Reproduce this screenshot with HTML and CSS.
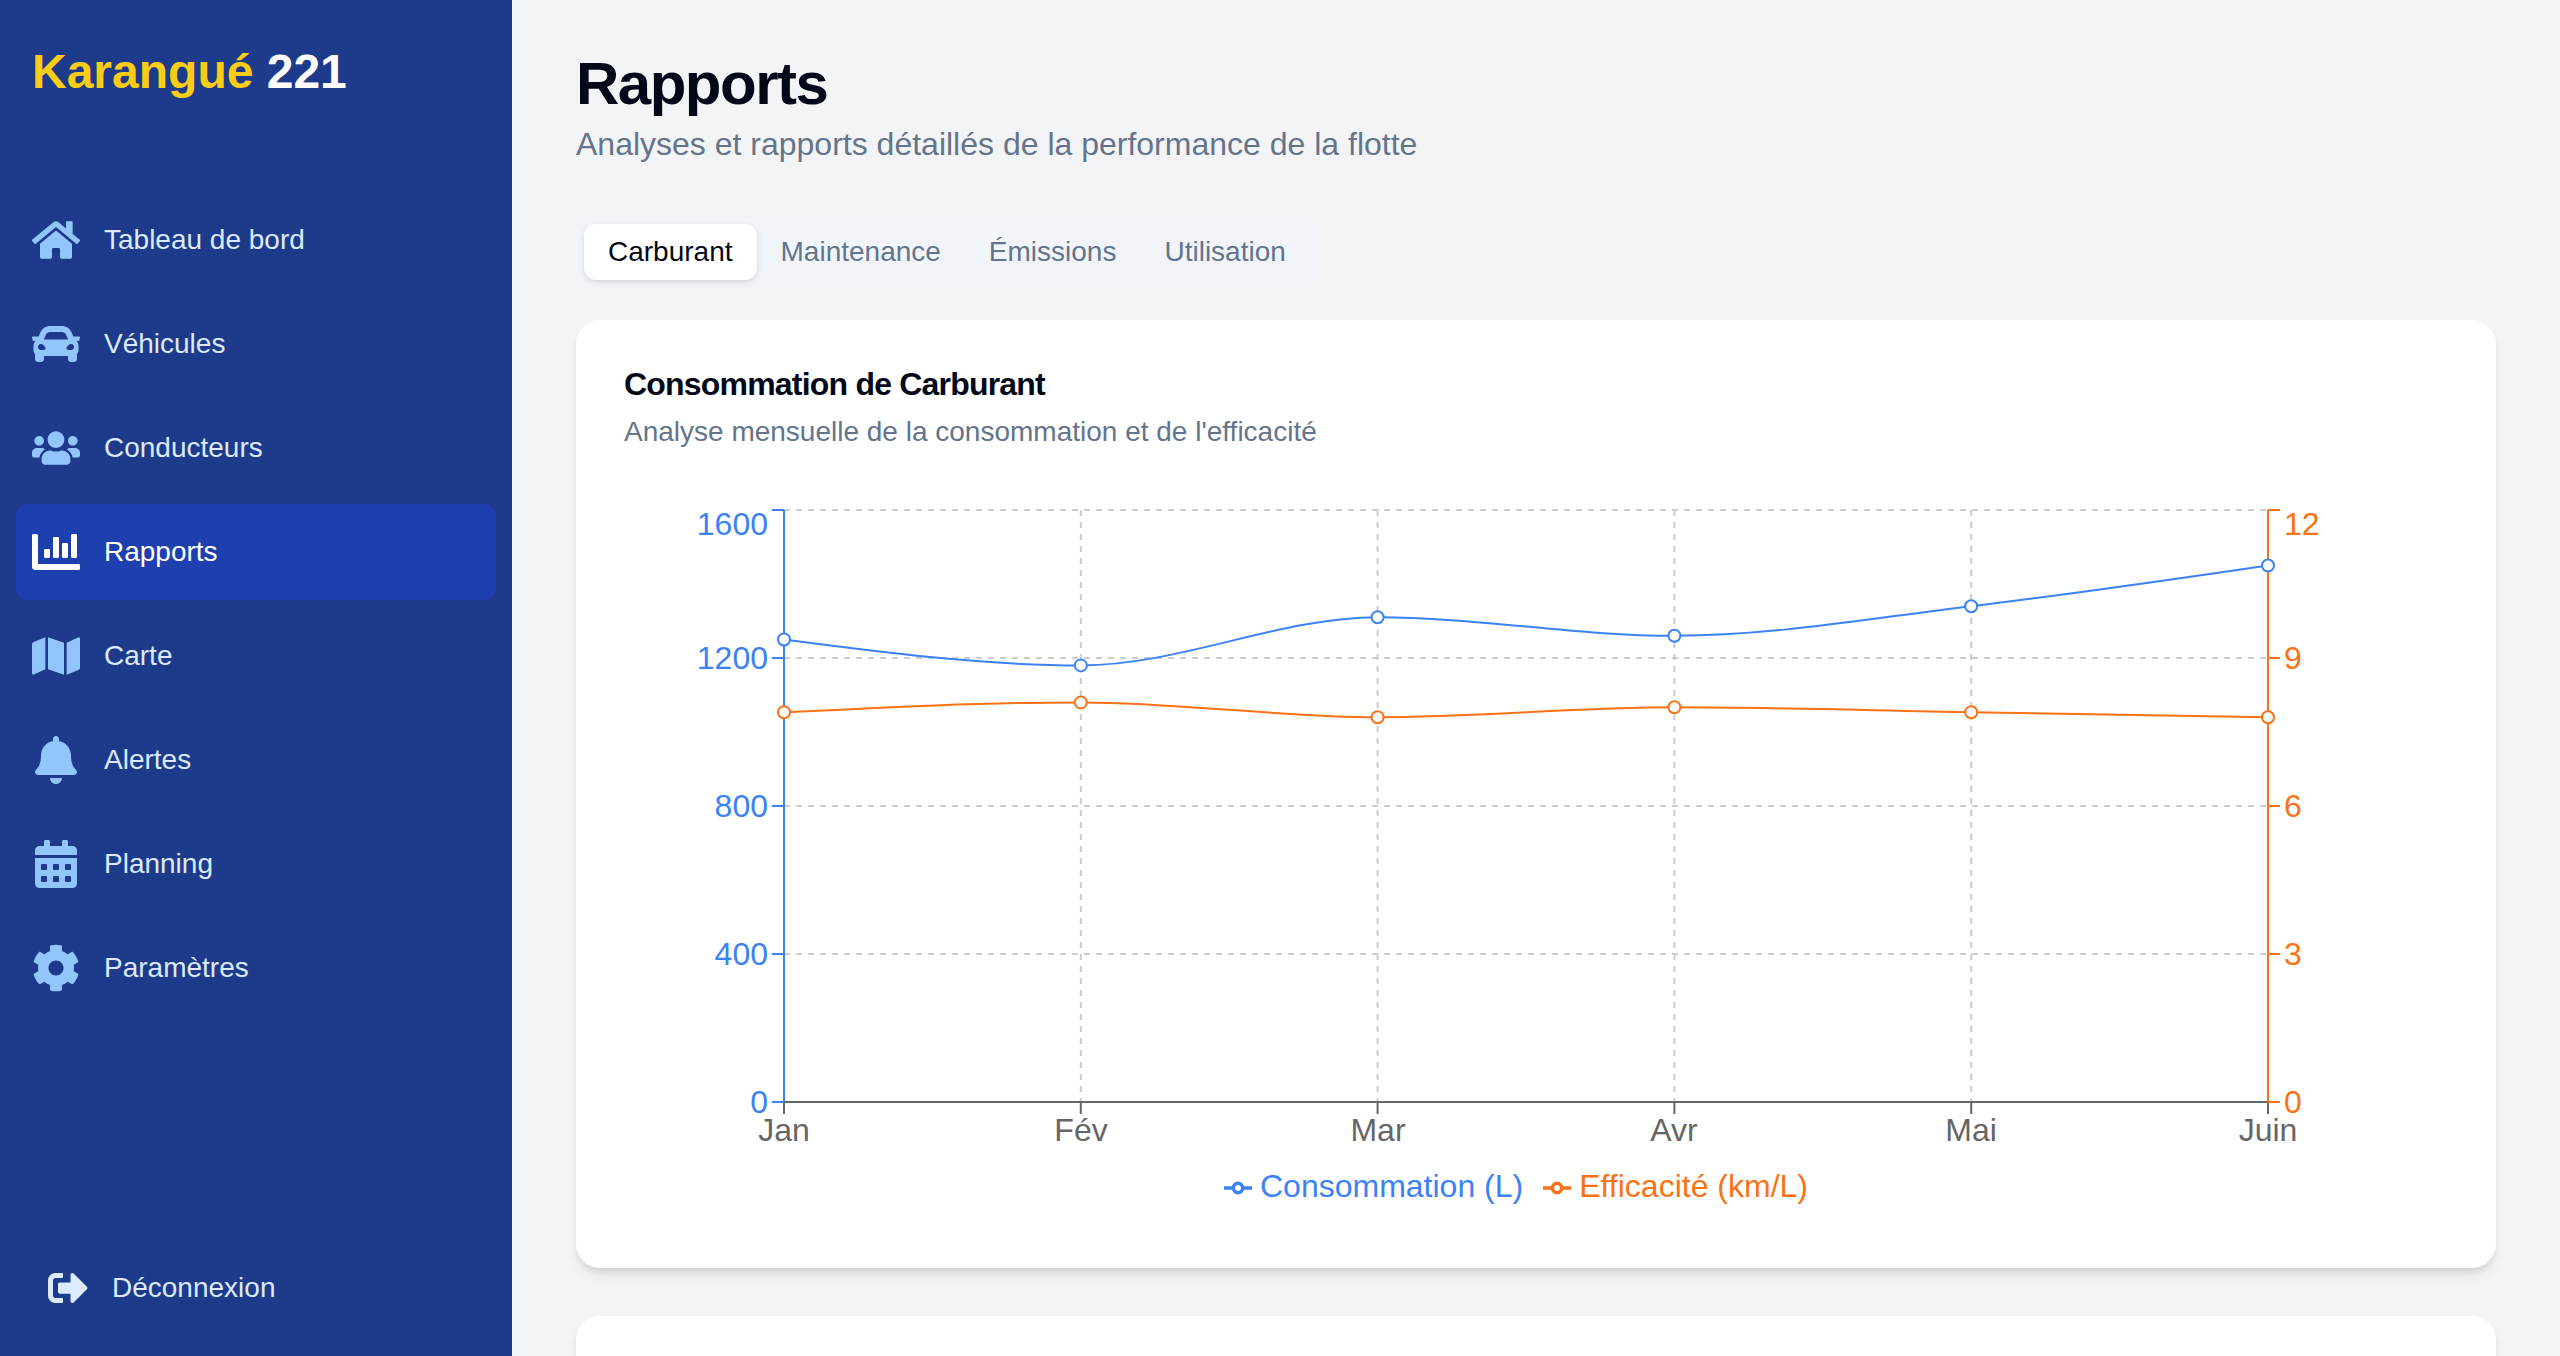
FILE: index.html
```html
<!DOCTYPE html>
<html lang="fr">
<head>
<meta charset="utf-8">
<meta name="viewport" content="width=device-width, initial-scale=1">
<title>Karangué 221</title>
<link rel="stylesheet" href="styles.css">
</head>
<body>
<div class="app">
  <aside class="sidebar">
    <div class="brand"><span class="brand-name">Karangué</span> 221</div>
    <nav class="nav">
      <a class="nav-link" href="#tableau">
        <svg class="icon" viewBox="0 0 576 512" aria-hidden="true"><path d="M280.37 148.26L96 300.11V464a16 16 0 0 0 16 16l112.06-.29a16 16 0 0 0 15.92-16V368a16 16 0 0 1 16-16h64a16 16 0 0 1 16 16v95.64a16 16 0 0 0 16 16.05L464 480a16 16 0 0 0 16-16V300L295.67 148.26a12.19 12.19 0 0 0-15.3 0zM571.6 251.47L488 182.56V44.05a12 12 0 0 0-12-12h-56a12 12 0 0 0-12 12v72.61L318.47 43a48 48 0 0 0-61 0L4.34 251.47a12 12 0 0 0-1.6 16.9l25.5 31A12 12 0 0 0 45.15 301l235.22-193.74a12.19 12.19 0 0 1 15.3 0L530.9 301a12 12 0 0 0 16.9-1.6l25.5-31a12 12 0 0 0-1.7-16.93z"/></svg>
        <span>Tableau de bord</span>
      </a>
      <a class="nav-link" href="#vehicules">
        <svg class="icon" viewBox="0 0 512 512" aria-hidden="true"><path d="M499.99 176h-59.87l-16.64-41.6C406.38 91.63 365.57 64 319.5 64h-127c-46.06 0-86.88 27.63-103.99 70.4L71.87 176H12.01C4.2 176-1.53 183.34.37 190.91l6 24C7.7 220.25 12.5 224 18.01 224h20.07C24.65 235.73 16 252.78 16 272v48c0 16.12 6.16 30.67 16 41.93V416c0 17.67 14.33 32 32 32h32c17.67 0 32-14.33 32-32v-32h256v32c0 17.67 14.33 32 32 32h32c17.67 0 32-14.33 32-32v-54.07c9.84-11.25 16-25.8 16-41.93v-48c0-19.22-8.65-36.27-22.07-48H494c5.51 0 10.31-3.75 11.64-9.09l6-24c1.89-7.57-3.84-14.91-11.65-14.91zm-352.06-17.83c7.29-18.22 24.94-30.17 44.57-30.17h127c19.63 0 37.28 11.95 44.57 30.17L384 208H128l19.93-49.83zM96 319.8c-19.2 0-32-12.76-32-31.9S76.8 256 96 256s48 28.71 48 47.85-28.8 15.95-48 15.95zm320 0c-19.2 0-48 3.19-48-15.95S396.8 256 416 256s32 12.76 32 31.9-12.8 31.9-32 31.9z"/></svg>
        <span>Véhicules</span>
      </a>
      <a class="nav-link" href="#conducteurs">
        <svg class="icon" viewBox="0 0 640 512" aria-hidden="true"><path d="M96 224c35.3 0 64-28.7 64-64s-28.7-64-64-64-64 28.7-64 64 28.7 64 64 64zm448 0c35.3 0 64-28.7 64-64s-28.7-64-64-64-64 28.7-64 64 28.7 64 64 64zm32 32h-64c-17.6 0-33.5 7.1-45.1 18.6 40.3 22.1 68.9 62 75.1 109.4h66c17.7 0 32-14.3 32-32v-32c0-35.3-28.7-64-64-64zm-256 0c61.9 0 112-50.1 112-112S381.9 32 320 32 208 82.1 208 144s50.1 112 112 112zm76.8 32h-8.3c-20.8 10-43.9 16-68.5 16s-47.6-6-68.5-16h-8.3C179.6 288 128 339.6 128 403.2V432c0 26.5 21.5 48 48 48h288c26.5 0 48-21.5 48-48v-28.8c0-63.6-51.6-115.2-115.2-115.2zm-223.7-13.4C161.5 263.1 145.6 256 128 256H64c-35.3 0-64 28.7-64 64v32c0 17.7 14.3 32 32 32h65.9c6.3-47.4 34.9-87.3 75.2-109.4z"/></svg>
        <span>Conducteurs</span>
      </a>
      <a class="nav-link active" href="#rapports" aria-current="page">
        <svg class="icon" viewBox="0 0 512 512" aria-hidden="true"><path d="M332.8 320h38.4c6.4 0 12.8-6.4 12.8-12.8V172.8c0-6.4-6.4-12.8-12.8-12.8h-38.4c-6.4 0-12.8 6.4-12.8 12.8v134.4c0 6.4 6.4 12.8 12.8 12.8zm96 0h38.4c6.4 0 12.8-6.4 12.8-12.8V76.8c0-6.4-6.4-12.8-12.8-12.8h-38.4c-6.4 0-12.8 6.4-12.8 12.8v230.4c0 6.4 6.4 12.8 12.8 12.8zm-288 0h38.4c6.4 0 12.8-6.4 12.8-12.8v-70.4c0-6.4-6.4-12.8-12.8-12.8h-38.4c-6.4 0-12.8 6.4-12.8 12.8v70.4c0 6.4 6.4 12.8 12.8 12.8zm96 0h38.4c6.4 0 12.8-6.4 12.8-12.8V108.8c0-6.4-6.4-12.8-12.8-12.8h-38.4c-6.4 0-12.8 6.4-12.8 12.8v198.4c0 6.4 6.4 12.8 12.8 12.8zM496 384H64V80c0-8.84-7.16-16-16-16H16C7.16 64 0 71.16 0 80v336c0 17.67 14.33 32 32 32h464c8.84 0 16-7.16 16-16v-32c0-8.84-7.16-16-16-16z"/></svg>
        <span>Rapports</span>
      </a>
      <a class="nav-link" href="#carte">
        <svg class="icon" viewBox="0 0 576 512" aria-hidden="true"><path d="M0 117.66v346.32c0 11.32 11.43 19.06 21.94 14.86L160 416V32L20.12 87.95A32.006 32.006 0 0 0 0 117.66zM192 416l192 64V96L192 32v384zM554.06 33.16L416 96v384l139.88-55.95A31.996 31.996 0 0 0 576 394.34V48.02c0-11.32-11.43-19.06-21.94-14.86z"/></svg>
        <span>Carte</span>
      </a>
      <a class="nav-link" href="#alertes">
        <svg class="icon" viewBox="0 0 448 512" aria-hidden="true"><path d="M224 512c35.32 0 63.97-28.65 63.97-64H160.03c0 35.35 28.65 64 63.97 64zm215.39-149.71c-19.32-20.76-55.47-51.99-55.47-154.29 0-77.7-54.48-139.9-127.94-155.16V32c0-17.67-14.32-32-31.98-32s-31.98 14.33-31.98 32v20.84C118.56 68.1 64.08 130.3 64.08 208c0 102.3-36.15 133.53-55.47 154.29-6 6.45-8.66 14.16-8.61 21.71.11 16.4 12.98 32 32.1 32h383.8c19.12 0 32-15.6 32.1-32 .05-7.55-2.61-15.27-8.61-21.71z"/></svg>
        <span>Alertes</span>
      </a>
      <a class="nav-link" href="#planning">
        <svg class="icon" viewBox="0 0 448 512" aria-hidden="true"><path d="M0 464c0 26.5 21.5 48 48 48h352c26.5 0 48-21.5 48-48V192H0v272zm320-196c0-6.6 5.4-12 12-12h40c6.6 0 12 5.4 12 12v40c0 6.6-5.4 12-12 12h-40c-6.6 0-12-5.4-12-12v-40zm0 128c0-6.6 5.4-12 12-12h40c6.6 0 12 5.4 12 12v40c0 6.6-5.4 12-12 12h-40c-6.6 0-12-5.4-12-12v-40zM192 268c0-6.6 5.4-12 12-12h40c6.6 0 12 5.4 12 12v40c0 6.6-5.4 12-12 12h-40c-6.6 0-12-5.4-12-12v-40zm0 128c0-6.6 5.4-12 12-12h40c6.6 0 12 5.4 12 12v40c0 6.6-5.4 12-12 12h-40c-6.6 0-12-5.4-12-12v-40zM64 268c0-6.6 5.4-12 12-12h40c6.6 0 12 5.4 12 12v40c0 6.6-5.4 12-12 12H76c-6.6 0-12-5.4-12-12v-40zm0 128c0-6.6 5.4-12 12-12h40c6.6 0 12 5.4 12 12v40c0 6.6-5.4 12-12 12H76c-6.6 0-12-5.4-12-12v-40zM400 64h-48V16c0-8.8-7.2-16-16-16h-32c-8.8 0-16 7.2-16 16v48H160V16c0-8.8-7.2-16-16-16h-32c-8.8 0-16 7.2-16 16v48H48C21.5 64 0 85.5 0 112v48h448v-48c0-26.5-21.5-48-48-48z"/></svg>
        <span>Planning</span>
      </a>
      <a class="nav-link" href="#parametres">
        <svg class="icon" viewBox="0 0 512 512" aria-hidden="true"><path d="M487.4 315.7l-42.6-24.6c4.3-23.2 4.3-47 0-70.2l42.6-24.6c4.9-2.8 7.1-8.6 5.5-14-11.1-35.6-30-67.8-54.7-94.6-3.8-4.1-10-5.1-14.8-2.3L380.8 110c-17.9-15.4-38.5-27.3-60.8-35.1V25.8c0-5.6-3.9-10.5-9.4-11.7-36.7-8.2-74.3-7.8-109.2 0-5.5 1.2-9.4 6.1-9.4 11.7V75c-22.2 7.9-42.8 19.8-60.8 35.1L88.7 85.5c-4.9-2.8-11-1.9-14.8 2.3-24.7 26.7-43.6 58.9-54.7 94.6-1.7 5.4.6 11.2 5.5 14L67.3 221c-4.3 23.2-4.3 47 0 70.2l-42.6 24.6c-4.9 2.8-7.1 8.6-5.5 14 11.1 35.6 30 67.8 54.7 94.6 3.8 4.1 10 5.1 14.8 2.3l42.6-24.6c17.9 15.4 38.5 27.3 60.8 35.1v49.2c0 5.6 3.9 10.5 9.4 11.7 36.7 8.2 74.3 7.8 109.2 0 5.5-1.2 9.4-6.1 9.4-11.7v-49.2c22.2-7.9 42.8-19.8 60.8-35.1l42.6 24.6c4.9 2.8 11 1.9 14.8-2.3 24.7-26.7 43.6-58.9 54.7-94.6 1.5-5.5-.7-11.3-5.6-14.1zM256 336c-44.1 0-80-35.9-80-80s35.9-80 80-80 80 35.9 80 80-35.9 80-80 80z"/></svg>
        <span>Paramètres</span>
      </a>
    </nav>
    <div class="sidebar-footer">
      <button class="logout" type="button">
        <svg class="icon icon-small" viewBox="0 0 512 512" aria-hidden="true"><path d="M497 273L329 441c-15 15-41 4.5-41-17v-96H152c-13.3 0-24-10.7-24-24v-96c0-13.3 10.7-24 24-24h136V88c0-21.4 25.9-32 41-17l168 168c9.3 9.4 9.3 24.6 0 34zM192 436v-40c0-6.6-5.4-12-12-12H96c-17.7 0-32-14.3-32-32V160c0-17.7 14.3-32 32-32h84c6.6 0 12-5.4 12-12V76c0-6.6-5.4-12-12-12H96c-53 0-96 43-96 96v192c0 53 43 96 96 96h84c6.6 0 12-5.4 12-12z"/></svg>
        <span>Déconnexion</span>
      </button>
    </div>
  </aside>

  <main class="main">
    <header class="page-header">
      <h1 class="page-title">Rapports</h1>
      <p class="page-subtitle">Analyses et rapports détaillés de la performance de la flotte</p>
    </header>

    <div class="tabs" role="tablist">
      <button class="tab selected" type="button" role="tab" aria-selected="true">Carburant</button>
      <button class="tab" type="button" role="tab" aria-selected="false">Maintenance</button>
      <button class="tab" type="button" role="tab" aria-selected="false">Émissions</button>
      <button class="tab" type="button" role="tab" aria-selected="false">Utilisation</button>
    </div>

    <div class="cards">
      <section class="card">
        <div class="card-header">
          <h2 class="card-title">Consommation de Carburant</h2>
          <p class="card-text">Analyse mensuelle de la consommation et de l'efficacité</p>
        </div>
        <div class="chart">
          <svg class="plot" viewBox="0 0 1824 662" role="img" aria-label="Consommation et efficacité par mois">
            <path class="grid" d="M160 10H1644M160 158H1644M160 306H1644M160 454H1644"/>
            <path class="grid" d="M456.8 10V602M753.6 10V602M1050.4 10V602M1347.2 10V602"/>
            <path class="axis" d="M160 602H1644M160 602v12M456.8 602v12M753.6 602v12M1050.4 602v12M1347.2 602v12M1644 602v12"/>
            <g class="months">
              <text x="160" y="641">Jan</text>
              <text x="457" y="641">Fév</text>
              <text x="754" y="641">Mar</text>
              <text x="1050" y="641">Avr</text>
              <text x="1347" y="641">Mai</text>
              <text x="1644" y="641">Juin</text>
            </g>
            <path class="axis blue" d="M160 10V602M160 10h-12M160 158h-12M160 306h-12M160 454h-12M160 602h-12"/>
            <g class="ticks-left">
              <text x="144" y="35">1600</text>
              <text x="144" y="169">1200</text>
              <text x="144" y="317">800</text>
              <text x="144" y="465">400</text>
              <text x="144" y="613">0</text>
            </g>
            <path class="axis orange" d="M1644 10V602M1644 10h12M1644 158h12M1644 306h12M1644 454h12M1644 602h12"/>
            <g class="ticks-right">
              <text x="1660" y="35">12</text>
              <text x="1660" y="169">9</text>
              <text x="1660" y="317">6</text>
              <text x="1660" y="465">3</text>
              <text x="1660" y="613">0</text>
            </g>
            <path class="line blue" d="M160 139.5C258.9 152.5 357.9 165.4 456.8 165.4C555.7 165.4 654.7 117.3 753.6 117.3C852.5 117.3 951.5 135.8 1050.4 135.8C1149.3 135.8 1248.3 117.9 1347.2 106.2C1446.1 94.5 1545.1 80 1644 65.5"/>
            <g class="dots blue">
              <circle cx="160" cy="139.5" r="6"/><circle cx="456.8" cy="165.4" r="6"/><circle cx="753.6" cy="117.3" r="6"/><circle cx="1050.4" cy="135.8" r="6"/><circle cx="1347.2" cy="106.2" r="6"/><circle cx="1644" cy="65.5" r="6"/>
            </g>
            <path class="line orange" d="M160 212.3C258.9 207.4 357.9 202.4 456.8 202.4C555.7 202.4 654.7 217.2 753.6 217.2C852.5 217.2 951.5 207.3 1050.4 207.3C1149.3 207.3 1248.3 210.6 1347.2 212.3C1446.1 213.9 1545.1 215.6 1644 217.2"/>
            <g class="dots orange">
              <circle cx="160" cy="212.3" r="6"/><circle cx="456.8" cy="202.4" r="6"/><circle cx="753.6" cy="217.2" r="6"/><circle cx="1050.4" cy="207.3" r="6"/><circle cx="1347.2" cy="212.3" r="6"/><circle cx="1644" cy="217.2" r="6"/>
            </g>
          </svg>
          <ul class="legend">
            <li class="legend-item blue">
              <svg class="legend-mark" viewBox="0 0 32 32" aria-hidden="true"><path d="M0 16h10.667A5.333 5.333 0 1 1 21.333 16H32M21.333 16A5.333 5.333 0 1 1 10.667 16"/></svg>
              <span>Consommation (L)</span>
            </li>
            <li class="legend-item orange">
              <svg class="legend-mark" viewBox="0 0 32 32" aria-hidden="true"><path d="M0 16h10.667A5.333 5.333 0 1 1 21.333 16H32M21.333 16A5.333 5.333 0 1 1 10.667 16"/></svg>
              <span>Efficacité (km/L)</span>
            </li>
          </ul>
        </div>
      </section>
      <section class="card card-next"></section>
    </div>
  </main>
</div>
</body>
</html>
```
FILE: styles.css
```css
* {
  box-sizing: border-box;
  margin: 0;
  padding: 0;
}

body {
  background: #f3f4f6;
  color: #020817;
  font-family: "Liberation Sans", Arial, Helvetica, sans-serif;
  font-size: 32px;
  line-height: 48px;
}

button {
  border: 0;
  background: none;
  font: inherit;
  cursor: pointer;
}

.app {
  display: flex;
  height: 100vh;
}

/* Sidebar */
.sidebar {
  display: flex;
  flex-direction: column;
  flex: 0 0 512px;
  background: #1e3a8a;
  color: #dbeafe;
  font-size: 28px;
  line-height: 40px;
}

.brand {
  padding: 40px 32px;
  color: #fff;
  font-size: 48px;
  font-weight: 700;
  line-height: 64px;
}

.brand-name {
  color: #facc15;
}

.nav {
  display: flex;
  flex: 1;
  flex-direction: column;
  gap: 8px;
  padding: 48px 16px 0;
}

.nav-link {
  display: flex;
  align-items: center;
  gap: 24px;
  padding: 24px 16px;
  border-radius: 12px;
  color: inherit;
  text-decoration: none;
}

.nav-link.active {
  background: #1e40af;
  color: #fff;
}

.icon {
  flex: none;
  width: 48px;
  height: 48px;
  fill: #93c5fd;
}

.active .icon {
  fill: #fff;
}

.icon-small {
  width: 40px;
  height: 40px;
  fill: #dbeafe;
}

.sidebar-footer {
  padding: 16px;
}

.logout {
  display: flex;
  align-items: center;
  gap: 24px;
  width: 100%;
  padding: 32px;
  color: inherit;
}

/* Page */
.main {
  flex: 1;
  min-width: 0;
  padding: 48px 64px;
  overflow-y: auto;
  scrollbar-width: none;
}

.page-title {
  font-size: 60px;
  font-weight: 700;
  letter-spacing: -0.025em;
  line-height: 72px;
}

.page-subtitle {
  color: #64748b;
}

.tabs {
  display: inline-flex;
  margin-top: 48px;
  padding: 8px;
  border-radius: 16px;
  background: #f1f5f9;
  vertical-align: top;
}

.tab {
  padding: 8px 24px;
  border-radius: 12px;
  color: #64748b;
  font-size: 28px;
  line-height: 40px;
}

.tab.selected {
  background: #fff;
  box-shadow: 0 2px 6px rgb(0 0 0 / 10%), 0 2px 4px -2px rgb(0 0 0 / 10%);
  color: #020817;
}

.cards {
  display: grid;
  gap: 48px;
  margin-top: 32px;
}

.card {
  padding: 48px;
  border-radius: 24px;
  background: #fff;
  box-shadow: 0 8px 12px -2px rgb(0 0 0 / 10%), 0 4px 8px -4px rgb(0 0 0 / 10%);
}

.card-next {
  min-height: 320px;
}

.card-header {
  display: grid;
  gap: 12px;
}

.card-title {
  font-size: 32px;
  font-weight: 700;
  letter-spacing: -0.025em;
  line-height: 32px;
}

.card-text {
  color: #64748b;
  font-size: 28px;
  line-height: 40px;
}

/* Chart */
.chart {
  margin-top: 48px;
  padding-bottom: 10px;
}

.blue {
  color: #3b82f6;
}

.orange {
  color: #f97316;
}

.plot {
  display: block;
  width: 100%;
  height: auto;
}

.grid {
  fill: none;
  stroke: #ccc;
  stroke-width: 2;
  stroke-dasharray: 6 6;
}

.axis {
  fill: none;
  stroke: #666;
  stroke-width: 2;
}

.axis.blue,
.axis.orange,
.line,
.dots {
  stroke: currentColor;
}

.line {
  fill: none;
  stroke-width: 2;
}

.dots {
  fill: #fff;
  stroke-width: 2;
}

.months {
  fill: #666;
  text-anchor: middle;
}

.ticks-left {
  fill: #3b82f6;
  text-anchor: end;
}

.ticks-right {
  fill: #f97316;
}

.legend {
  display: flex;
  justify-content: center;
  padding: 0 60px 0 40px;
  list-style: none;
}

.legend-item {
  display: flex;
  align-items: center;
  gap: 8px;
  margin-right: 20px;
}

.legend-mark {
  width: 28px;
  height: 28px;
  margin-top: 4px;
  fill: none;
  stroke: currentColor;
  stroke-width: 4;
}
```
